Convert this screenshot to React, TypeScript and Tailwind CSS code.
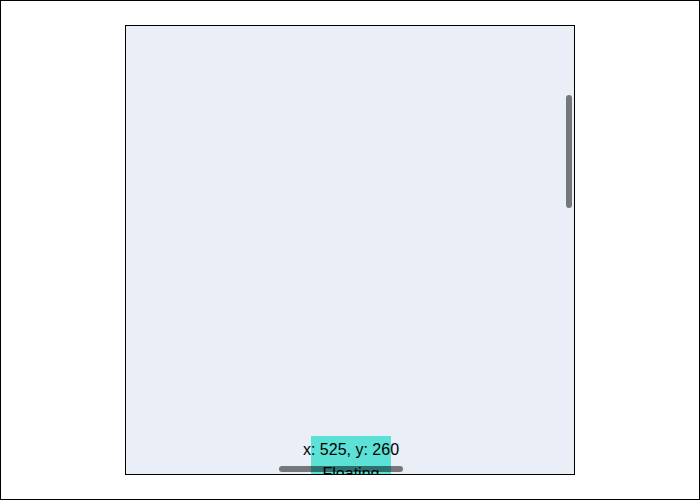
const App = () => {
  return (
    <div className="w-[700px] h-[500px] bg-white border border-black flex items-center justify-center font-['Liberation_Sans',Arial,sans-serif]">
      {/* scroll container */}
      <div className="relative w-[450px] h-[450px] border border-black bg-[#eaeef6] overflow-hidden">
        {/* floating element */}
        <div className="absolute left-[185px] top-[410px] w-[80px] bg-[#5ce1d6] flex flex-col items-center text-base leading-6 text-black">
          <div className="whitespace-nowrap pt-[2px]">x: 525, y: 260</div>
          <div className="whitespace-nowrap">Floating</div>
        </div>

        {/* vertical scrollbar thumb */}
        <div className="absolute right-[2px] top-[69px] w-[6px] h-[113px] rounded-full bg-black/50" />
        {/* horizontal scrollbar thumb */}
        <div className="absolute bottom-[2px] left-[153px] h-[6px] w-[124px] rounded-full bg-black/50" />
      </div>
    </div>
  )
}

export default App
